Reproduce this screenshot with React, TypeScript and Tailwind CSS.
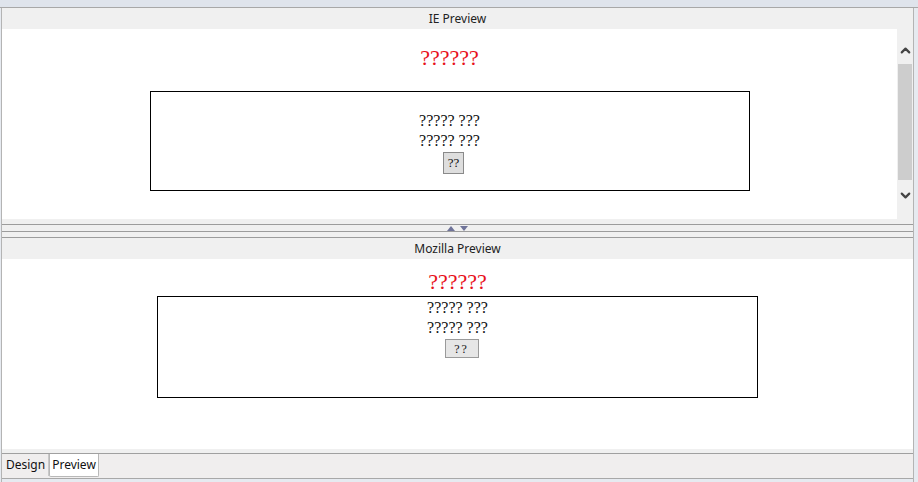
import { ChevronUp, ChevronDown } from 'lucide-react';

const serif = { fontFamily: '"Liberation Serif", "Noto Sans CJK SC", serif' };

function PaneHeader({ title }: { title: string }) {
  return (
    <div className="h-[21px] shrink-0 bg-[#f0f0f0] flex items-center justify-center text-[12px] text-[#222] font-['Noto_Sans',sans-serif]">
      {title}
    </div>
  );
}

function FormLines() {
  return (
    <>
      <div className="leading-[20px]">????? ???</div>
      <div className="leading-[20px]">????? ???</div>
    </>
  );
}

export default function App() {
  return (
    <div className="w-[918px] h-[482px] bg-[#e6eaf0] flex flex-col overflow-hidden">
      {/* top strip */}
      <div className="h-[8px] shrink-0 bg-[#dfe4ec] border-b border-[#a8a8a8]" />

      <div className="flex-1 flex flex-col ml-[1px] mr-[4px] border-l border-r border-[#b4b4b4] bg-[#f0f0f0]">
        {/* IE preview */}
        <PaneHeader title="IE Preview" />
        <div className="h-[190px] shrink-0 flex">
          <div className="flex-1 bg-white flex flex-col items-center" style={serif}>
            <div className="text-[22px] text-[#e8101a] leading-[26px] mt-[16px]">??????</div>
            <div className="mt-[20px] w-[600px] h-[100px] border border-black flex flex-col items-center justify-center text-[16px] text-[#111] pt-[2px]">
              <FormLines />
              <div className="mt-[1px] ml-[8px] w-[21px] h-[22px] bg-[#dedede] border border-[#8a8a8a] text-[13px] flex items-center justify-center">??</div>
            </div>
          </div>
          <div className="w-[16px] bg-[#f0f0f0] flex flex-col items-center">
            <div className="h-[35px] flex items-center justify-center pt-[7px]">
              <ChevronUp className="w-[15px] h-[15px] text-[#444]" strokeWidth={3.5} />
            </div>
            <div className="w-[14px] h-[116px] bg-[#cdcdcd]" />
            <div className="h-[39px] flex items-start justify-center pt-[8px]">
              <ChevronDown className="w-[15px] h-[15px] text-[#444]" strokeWidth={3.5} />
            </div>
          </div>
        </div>

        {/* splitter */}
        <div className="h-[19px] shrink-0 bg-[#f0f0f0] flex flex-col">
          <div className="h-[5px]" />
          <div className="h-[8px] border-t border-[#9c9c9c] border-b flex items-center justify-center gap-[5px]">
            <svg width="8" height="5" viewBox="0 0 8 5"><path d="M0 5 L4 0 L8 5 Z" fill="#6f7399" /></svg>
            <svg width="8" height="5" viewBox="0 0 8 5"><path d="M0 0 L8 0 L4 5 Z" fill="#6f7399" /></svg>
          </div>
          <div className="h-[6px] border-b border-[#9c9c9c]" />
        </div>

        {/* Mozilla preview */}
        <PaneHeader title="Mozilla Preview" />
        <div className="h-[190px] shrink-0 bg-white flex flex-col items-center" style={serif}>
          <div className="text-[22px] text-[#e8101a] leading-[26px] mt-[10px]">??????</div>
          <div className="mt-[1px] w-[601px] h-[102px] border border-black flex flex-col items-center text-[16px] text-[#111] pt-[1px]">
            <FormLines />
            <div className="mt-[1px] ml-[8px] w-[34px] h-[19px] bg-[#e6e6e6] border border-[#9a9a9a] text-[12px] tracking-[2px] flex items-center justify-center">??</div>
          </div>
        </div>

        {/* tabs */}
        <div className="h-[5px] shrink-0 bg-[#f0f0f0] border-b border-[#a0a0a0]" />
        <div className="h-[24px] shrink-0 bg-[#f0eeee] flex items-start pl-[1px] text-[12px] text-[#111] font-['Noto_Sans',sans-serif]">
          <div className="h-[22px] px-[3px] flex items-center border-r border-[#c8c8c8]">Design</div>
          <div className="h-[23px] px-[2px] flex items-center bg-white border border-t-0 border-[#b8b8b8] rounded-b-[2px]">Preview</div>
        </div>
        <div className="flex-1 border-t border-[#a8a8a8] bg-[#e6eaf0]" />
      </div>
    </div>
  );
}
